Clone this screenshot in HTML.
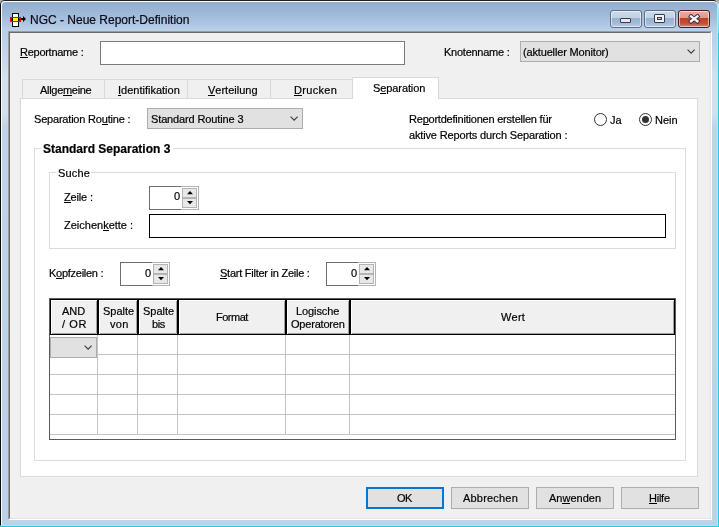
<!DOCTYPE html>
<html><head><meta charset="utf-8">
<style>
*{margin:0;padding:0;box-sizing:border-box}
html,body{width:719px;height:527px;overflow:hidden;background:#2ec8e6;position:relative}
.a{position:absolute}
.t{position:absolute;font:11px/13px "Liberation Sans",sans-serif;white-space:pre;color:#000;will-change:transform;-webkit-text-stroke:0.2px #000}
u{text-decoration:none;position:relative;display:inline-block}
u::after{content:"";position:absolute;left:0;right:0;top:11px;height:1px;background:#000}
.win{position:absolute;left:0;top:0;width:718px;height:526px;background:linear-gradient(#9fbadb 0,#b9cfe8 32px,#c6d8ec 60px,#d3e1ef 75px,#d3e1ef 112px,#bfd4ea 125px,#bdd3e9 300px,#bcd1ea 100%);border-top:1px solid #1e1e1e;border-left:1px solid #0a0a0a;border-right:1px solid #d6d8ee;border-bottom:1px solid #d0d3ea;border-radius:5px 5px 0 0}
.hl{position:absolute;left:0;top:0;right:0;bottom:0;border-top:1px solid #fbfdff;border-left:1px solid #fbfdff;border-radius:4px 4px 0 0}
.tbar{position:absolute;left:2px;top:2px;width:715px;height:29px;background:linear-gradient(#93aece,#a2bcda 50%,#bad1ea);border-radius:5px 5px 0 0}
.client{position:absolute;left:8px;top:31px;width:704px;height:489px;background:#f0f0f0;border-left:1px solid #9a9a9a;border-top:1px solid #9a9a9a;border-right:1px solid #fff;border-bottom:1px solid #fff}
.client2{position:absolute;left:0;top:0;right:0;bottom:0;border-left:1px solid #6a6a6a;border-top:1px solid #6a6a6a;border-right:1px solid #e3e3e3;border-bottom:1px solid #e3e3e3}
.wbtn{position:absolute;top:10px;width:32px;height:18px;border:1px solid #5d6f86;border-radius:3px;background:linear-gradient(#cbdaeb 0,#c0d2e7 42%,#97b1cf 43%,#a2bad6 75%,#b8cce4 100%);box-shadow:inset 0 0 0 1px rgba(255,255,255,.55)}
.close{border-color:#4e1a1a;background:linear-gradient(#e9ab9f 0,#e3998a 42%,#bb3e26 43%,#c2523a 78%,#d5836c 100%)}
.edit{position:absolute;background:#fff;border:1px solid #7a7a7a}
.combo{position:absolute;background:#e1e1e1;border:1px solid #adadad}
.btn{position:absolute;top:487px;width:78px;height:22px;background:#e1e1e1;border:1px solid #adadad}
.gb{position:absolute;border:1px solid #dcdcdc}
.spin{position:absolute;width:50px;height:24px;background:#fff;border:1px solid #6e6e6e}
.spin .r{position:absolute;left:31px;top:-1px;width:18px;height:24px;border:1px solid #b4b4b4;border-left:none;background:#fff}
.spin .up,.spin .dn{position:absolute;left:32px;width:15px;height:10px;background:#e8e8e8;border:1px solid #b4b4b4}
.spin .up{top:1px}.spin .dn{top:11px}
.spin svg{position:absolute;left:4px;top:2px}
.hc{position:absolute;top:299px;height:36px;background:#f0f0f0;border:1px solid #000;box-shadow:inset 1px 1px 0 #fff,inset -1px -1px 0 #a0a0a0}
.tab{position:absolute;top:79px;height:20px;background:#f0f0f0;border:1px solid #d9d9d9;border-bottom:none}
</style></head><body>
<div class="a" style="left:0;top:0;width:12px;height:8px;background:#b0b0b0"></div>
<div class="a" style="left:700px;top:0;width:19px;height:3px;background:#b0b0b0"></div>
<div class="a" style="left:718px;top:3px;width:1px;height:30px;background:linear-gradient(#b8eef8,#5fd6ee)"></div>
<div class="win"><div class="hl"></div></div>
<div class="tbar"></div>
<!-- title icon -->
<svg class="a" style="left:8px;top:10px" width="20" height="18" viewBox="0 0 20 18">
<rect x="4.5" y="3.5" width="6" height="13" fill="#fff" stroke="#000"/>
<rect x="2.5" y="7.5" width="10" height="4" fill="#ffff00" stroke="#ff0000"/>
<rect x="3" y="8" width="1" height="3" fill="#1f3a4a"/>
<rect x="11" y="8" width="1" height="3" fill="#1f3a4a"/>
<rect x="4" y="8" width="1" height="3" fill="#000"/>
<rect x="10" y="8" width="1" height="3" fill="#000"/>
<rect x="13" y="8" width="3" height="2" fill="#000"/>
<path d="M15 6 L18 9 L15 12 Z" fill="#000"/>
</svg>
<div class="t" style="left:30px;top:13px;font-size:12px;line-height:14px;color:#0b0b20">NGC - Neue Report-Definition</div>
<div class="wbtn" style="left:610px"><div class="a" style="left:9px;top:7px;width:11px;height:5px;background:#e8e8e8;border:1px solid #3a3a4a;border-radius:1px"></div></div>
<div class="wbtn" style="left:644px"><div class="a" style="left:9px;top:3px;width:11px;height:9px;background:#f2f2f2;border:1px solid #3a3a4a;border-radius:1px"><div class="a" style="left:2px;top:2px;width:5px;height:3px;border:1px solid #3a3a4a;background:#c0d0e4"></div></div></div>
<div class="wbtn close" style="left:678px;width:32px"><svg class="a" style="left:9px;top:3px" width="13" height="10" viewBox="0 0 13 10"><path d="M3 2.4 L9.4 7.3 M9.4 2.4 L3 7.3" stroke="#3a2a3a" stroke-width="4.2" stroke-linecap="square"/><path d="M3 2.4 L9.4 7.3 M9.4 2.4 L3 7.3" stroke="#f4f4f4" stroke-width="2.4" stroke-linecap="square"/></svg></div>

<div class="client"><div class="client2"></div></div>

<!-- Reportname -->
<div class="t" style="left:20px;top:46px;letter-spacing:-0.27px"><u>R</u>eportname :</div>
<div class="edit" style="left:100px;top:41px;width:305px;height:24px"></div>
<div class="t" style="left:444px;top:46px;letter-spacing:-0.25px">Knotenname :</div>
<div class="combo" style="left:520px;top:41px;width:180px;height:21px"></div>
<div class="t" style="left:523px;top:46px;letter-spacing:-0.16px">(aktueller Monitor)</div>
<svg class="a" style="left:687px;top:49px" width="9" height="6" viewBox="0 0 9 6"><path d="M0.6 0.6 L4.1 4.1 L7.6 0.6" fill="none" stroke="#3a3a3a" stroke-width="1.1"/></svg>

<!-- tabs -->
<div class="tab" style="left:22px;width:83px"></div>
<div class="tab" style="left:104px;width:84px"></div>
<div class="tab" style="left:187px;width:84px"></div>
<div class="tab" style="left:270px;width:84px"></div>
<div class="a" style="left:20px;top:98px;width:678px;height:379px;background:#fff;border:1px solid #d9d9d9"></div>
<div class="a" style="left:352px;top:77px;width:87px;height:22px;background:#fff;border:1px solid #d9d9d9;border-bottom:none"></div>
<div class="t" style="left:40px;top:84px;letter-spacing:-0.3px">Allge<u>m</u>eine</div>
<div class="t" style="left:118px;top:84px"><u>I</u>dentifikation</div>
<div class="t" style="left:208px;top:84px"><u>V</u>erteilung</div>
<div class="t" style="left:294px;top:84px;letter-spacing:0.3px"><u>D</u>rucken</div>
<div class="t" style="left:373px;top:82px;letter-spacing:-0.1px">S<u>e</u>paration</div>

<!-- separation routine -->
<div class="t" style="left:34px;top:113px;letter-spacing:-0.2px">Separation Ro<u>u</u>tine :</div>
<div class="combo" style="left:147px;top:108px;width:156px;height:21px"></div>
<div class="t" style="left:151px;top:113px;letter-spacing:-0.13px">Standard Routine 3</div>
<svg class="a" style="left:290px;top:116px" width="9" height="6" viewBox="0 0 9 6"><path d="M0.6 0.6 L4.1 4.1 L7.6 0.6" fill="none" stroke="#3a3a3a" stroke-width="1.1"/></svg>

<div class="t" style="left:409px;top:113px;letter-spacing:-0.22px">Re<u>p</u>ortdefinitionen erstellen für</div>
<div class="t" style="left:409px;top:129px;letter-spacing:-0.15px">aktive Reports durch Separation :</div>
<svg class="a" style="left:594px;top:113px" width="13" height="13" viewBox="0 0 13 13"><circle cx="6.5" cy="6.5" r="6" fill="#fff" stroke="#333"/></svg>
<div class="t" style="left:610px;top:114px">Ja</div>
<svg class="a" style="left:639px;top:113px" width="13" height="13" viewBox="0 0 13 13"><circle cx="6.5" cy="6.5" r="6" fill="#fff" stroke="#333"/><circle cx="6.5" cy="6.5" r="3.5" fill="#333"/></svg>
<div class="t" style="left:655px;top:114px">Nein</div>

<!-- group standard separation 3 -->
<div class="gb" style="left:34px;top:148px;width:652px;height:313px"></div>
<div class="a" style="left:41px;top:140px;width:132px;height:14px;background:#fff"></div>
<div class="t" style="left:43px;top:142px;font-size:12px;line-height:14px;font-weight:bold">Standard Separation 3</div>

<div class="gb" style="left:49px;top:172px;width:627px;height:77px"></div>
<div class="a" style="left:56px;top:166px;width:35px;height:12px;background:#fff"></div>
<div class="t" style="left:58px;top:167px;letter-spacing:0.2px">Suche</div>

<div class="t" style="left:64px;top:191px;letter-spacing:-0.17px"><u>Z</u>eile :</div>
<div class="spin" style="left:149px;top:186px"><div class="r"></div><div class="up"><svg width="6" height="4" viewBox="0 0 6 4"><path d="M0 3.2 L3 0 L6 3.2Z" fill="#000"/></svg></div><div class="dn"><svg width="6" height="4" viewBox="0 0 6 4"><path d="M0 0 L3 3.2 L6 0Z" fill="#000"/></svg></div></div>
<div class="t" style="left:174px;top:190px">0</div>
<div class="t" style="left:64px;top:219px">Zeichen<u>k</u>ette :</div>
<div class="a" style="left:149px;top:214px;width:517px;height:24px;background:#fff;border:1px solid #000"></div>

<div class="t" style="left:49px;top:267px;letter-spacing:-0.27px">K<u>o</u>pfzeilen :</div>
<div class="spin" style="left:120px;top:262px"><div class="r"></div><div class="up"><svg width="6" height="4" viewBox="0 0 6 4"><path d="M0 3.2 L3 0 L6 3.2Z" fill="#000"/></svg></div><div class="dn"><svg width="6" height="4" viewBox="0 0 6 4"><path d="M0 0 L3 3.2 L6 0Z" fill="#000"/></svg></div></div>
<div class="t" style="left:145px;top:267px">0</div>
<div class="t" style="left:220px;top:267px;letter-spacing:-0.25px"><u>S</u>tart Filter in Zeile :</div>
<div class="spin" style="left:326px;top:262px"><div class="r"></div><div class="up"><svg width="6" height="4" viewBox="0 0 6 4"><path d="M0 3.2 L3 0 L6 3.2Z" fill="#000"/></svg></div><div class="dn"><svg width="6" height="4" viewBox="0 0 6 4"><path d="M0 0 L3 3.2 L6 0Z" fill="#000"/></svg></div></div>
<div class="t" style="left:351px;top:267px">0</div>

<!-- grid -->
<div class="a" style="left:49px;top:298px;width:627px;height:142px;background:#fff;border:1px solid #5a5a5a"></div>
<div class="a" style="left:97px;top:335px;width:1px;height:100px;background:#c4c4c4"></div>
<div class="a" style="left:137px;top:335px;width:1px;height:100px;background:#c4c4c4"></div>
<div class="a" style="left:177px;top:335px;width:1px;height:100px;background:#c4c4c4"></div>
<div class="a" style="left:285px;top:335px;width:1px;height:100px;background:#c4c4c4"></div>
<div class="a" style="left:349px;top:335px;width:1px;height:100px;background:#c4c4c4"></div>
<div class="a" style="left:98px;top:354px;width:577px;height:1px;background:#c4c4c4"></div>
<div class="a" style="left:50px;top:374px;width:625px;height:1px;background:#c4c4c4"></div>
<div class="a" style="left:50px;top:394px;width:625px;height:1px;background:#c4c4c4"></div>
<div class="a" style="left:50px;top:414px;width:625px;height:1px;background:#c4c4c4"></div>
<div class="a" style="left:50px;top:434px;width:625px;height:1px;background:#c4c4c4"></div>
<div class="hc" style="left:50px;width:48px"></div>
<div class="hc" style="left:98px;width:40px"></div>
<div class="hc" style="left:138px;width:40px"></div>
<div class="hc" style="left:178px;width:108px"></div>
<div class="hc" style="left:286px;width:64px"></div>
<div class="hc" style="left:350px;width:325px"></div>
<div class="combo" style="left:50px;top:337px;width:47px;height:21px;background:#e1e1e1"></div>
<svg class="a" style="left:84px;top:345px" width="9" height="6" viewBox="0 0 9 6"><path d="M0.6 0.6 L4.1 4.1 L7.6 0.6" fill="none" stroke="#3a3a3a" stroke-width="1.1"/></svg>
<div class="t" style="left:62px;top:305px;letter-spacing:0px">AND</div>
<div class="t" style="left:62px;top:318px;letter-spacing:0.6px">/ OR</div>
<div class="t" style="left:103px;top:305px;letter-spacing:0px">Spalte</div>
<div class="t" style="left:110px;top:318px;letter-spacing:0.3px">von</div>
<div class="t" style="left:143px;top:305px;letter-spacing:0px">Spalte</div>
<div class="t" style="left:152px;top:318px;letter-spacing:-0.4px">bis</div>
<div class="t" style="left:216px;top:311px;letter-spacing:-0.5px">Format</div>
<div class="t" style="left:296px;top:305px;letter-spacing:-0.1px">Logische</div>
<div class="t" style="left:291px;top:318px;letter-spacing:-0.2px">Operatoren</div>
<div class="t" style="left:501px;top:311px;letter-spacing:0.3px">Wert</div>

<!-- buttons -->
<div class="btn" style="left:366px;border:2px solid #0078d7"></div>
<div class="t" style="left:397px;top:492px;letter-spacing:-0.5px">OK</div>
<div class="btn" style="left:451px"></div>
<div class="t" style="left:463px;top:492px;letter-spacing:0.2px">Abbrechen</div>
<div class="btn" style="left:536px"></div>
<div class="t" style="left:549px;top:492px">An<u>w</u>enden</div>
<div class="btn" style="left:621px"></div>
<div class="t" style="left:649px;top:492px;letter-spacing:-0.25px"><u>H</u>ilfe</div>
</body></html>
